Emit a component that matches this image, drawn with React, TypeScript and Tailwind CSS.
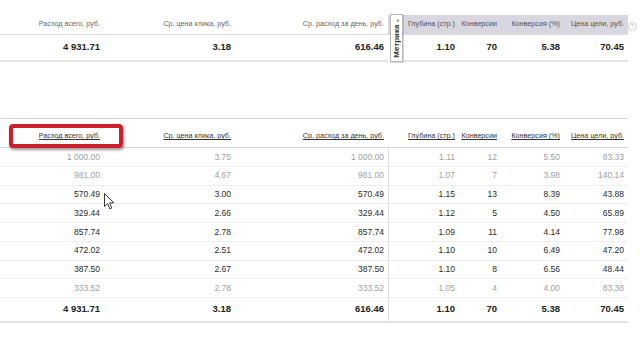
import React from 'react';

type Row = { v: string[]; muted?: boolean };

const rows: Row[] = [
  { v: ['1 000.00', '3.75', '1 000.00', '1.11', '12', '5.50', '83.33'], muted: true },
  { v: ['981.00', '4.67', '981.00', '1.07', '7', '3.98', '140.14'], muted: true },
  { v: ['570.49', '3.00', '570.49', '1.15', '13', '8.39', '43.88'] },
  { v: ['329.44', '2.66', '329.44', '1.12', '5', '4.50', '65.89'] },
  { v: ['857.74', '2.78', '857.74', '1.09', '11', '4.14', '77.98'] },
  { v: ['472.02', '2.51', '472.02', '1.10', '10', '6.49', '47.20'] },
  { v: ['387.50', '2.67', '387.50', '1.10', '8', '6.56', '48.44'] },
  { v: ['333.52', '2.78', '333.52', '1.05', '4', '4.00', '83.38'], muted: true },
];

const total = ['4 931.71', '3.18', '616.46', '1.10', '70', '5.38', '70.45'];

const leftHeads = ['Расход всего, руб.', 'Ср. цена клика, руб.', 'Ср. расход за день, руб.'];
const rightHeads = ['Глубина (стр.)', 'Конверсии', 'Конверсия (%)', 'Цена цели, руб.'];

const App: React.FC = () => {
  return (
    <div
      className="relative w-[640px] h-[360px] overflow-hidden bg-white pt-[15px]"
      style={{ fontFamily: '"Liberation Sans", Arial, sans-serif' }}
    >
      {/* верхняя сводная таблица */}
      <div className="flex">
        <div className="grid w-[628px] grid-cols-[104px_131px_153px_16px_55px_42px_63px_64px]">
          {leftHeads.map((h) => (
            <div
              key={h}
              className="flex h-[20px] items-center justify-end border-b border-[#dcdcdc] pr-[4px] text-[7.2px] text-[#666]"
            >
              {h}
            </div>
          ))}
          <div className="row-span-2 flex bg-[linear-gradient(#d8d6df_0,#d8d6df_20px,#fff_20px)]">
            <div className="ml-[2px] mt-[-1px] flex h-[48px] w-[13px] items-center justify-center border border-[#b8b8b8] bg-white shadow-[1px_1px_1px_rgba(0,0,0,0.15)]">
              <span className="rotate-180 text-[8px] font-bold text-[#333] [writing-mode:vertical-rl]">
                Метрика <span className="text-[6px] font-normal">»</span>
              </span>
            </div>
          </div>
          {rightHeads.map((h) => (
            <div
              key={h}
              className="flex h-[20px] items-center justify-end border-b border-[#dcdcdc] bg-[#d8d6df] pr-[4px] text-[7.2px] text-[#555]"
            >
              {h}
            </div>
          ))}
          {total.map((t, i) => (
            <div
              key={i}
              className={`flex h-[27px] items-center justify-end border-b-2 border-[#e4e4e4] pr-[4px] text-[9.5px] font-bold text-[#222] ${
                i === 3 ? 'col-start-5' : ''
              }`}
            >
              {t}
            </div>
          ))}
        </div>
        <div className="mt-[7px] flex h-[9px] w-[9px] items-center justify-center rounded-full border border-[#cfcfcf] text-[6px] text-[#bbb]">
          ?
        </div>
      </div>

      {/* подробная таблица */}
      <div className="mt-[56px] w-[628px] border-t border-[#cfcfcf]">
        <div className="grid h-[29px] grid-cols-[104px_131px_153px_71px_42px_63px_64px] border-b border-[#d6d6d6]">
          {[...leftHeads, ...rightHeads].map((h) => (
            <div
              key={h}
              className="flex items-end justify-end pb-[5px] pr-[4px] text-[7.2px] text-[#333] underline decoration-[#333]"
            >
              {h}
            </div>
          ))}
        </div>
        {rows.map((r, ri) => (
          <div
            key={ri}
            className={`grid h-[18.75px] grid-cols-[104px_131px_153px_71px_42px_63px_64px] border-b border-[#eeeeee] text-[8.5px] ${
              r.muted ? 'text-[#a0a0a0]' : 'text-[#2a2a2a]'
            }`}
          >
            {r.v.map((c, i) => (
              <div
                key={i}
                className={`flex items-center justify-end pr-[4px] ${i === 3 ? 'border-l border-[#dedede]' : ''}`}
              >
                {c}
              </div>
            ))}
          </div>
        ))}
        <div className="grid h-[25px] grid-cols-[104px_131px_153px_71px_42px_63px_64px] border-b-2 border-[#e2e2e2] text-[9.5px] font-bold text-[#222]">
          {total.map((t, i) => (
            <div
              key={i}
              className={`flex items-center justify-end pr-[4px] ${i === 3 ? 'border-l border-[#dedede]' : ''}`}
            >
              {t}
            </div>
          ))}
        </div>
      </div>

      {/* красная рамка-выделение */}
      <div className="absolute left-[9px] top-[124px] h-[24px] w-[114px] rounded-[4px] border-[4px] border-[#cf1f2a] shadow-[1px_2px_3px_rgba(0,0,0,0.4)]" />

      {/* курсор */}
      <svg className="absolute left-[104px] top-[193px]" width="11" height="17" viewBox="0 0 11 17">
        <path
          d="M0.5 0.5 L0.5 13.5 L3.6 10.6 L5.8 15.8 L7.8 14.9 L5.6 9.9 L9.8 9.9 Z"
          fill="#fff"
          stroke="#333"
          strokeWidth="1"
          strokeLinejoin="round"
        />
      </svg>
    </div>
  );
};

export default App;
